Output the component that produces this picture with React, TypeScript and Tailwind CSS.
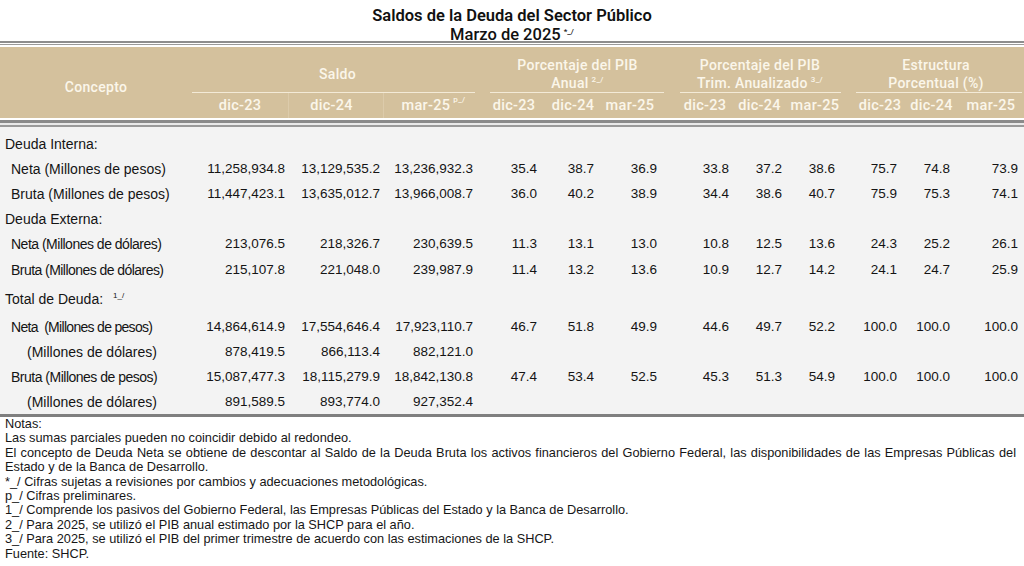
import React from 'react';

const cols =
  'grid grid-cols-[192px_96px_95px_100px_62px_56px_71px_61px_53px_62px_57px_53px_66px]';

// padding-right so the figures line up with the printed column
const numPad = [
  'pr-[3px]', 'pr-[3px]', 'pr-[10px]',
  'pr-[8px]', 'pr-[7px]', 'pr-[15px]',
  'pr-[4px]', 'pr-[4px]', 'pr-[13px]',
  'pr-[8px]', 'pr-[8px]', 'pr-[6px]',
];

const headPad = [
  '', 'pr-[9px]', '',
  '', '', 'pr-[13px]',
  'pl-[5px]', '', 'pr-[4px]',
  'pl-[7px]', '', '',
];

type Row = {
  label: string;
  kind: 'section' | 'item' | 'sub';
  tight?: string;
  values?: string[];
  h: string;
  note?: string;
};

const rows: Row[] = [
  { label: 'Deuda Interna:', kind: 'section', h: 'h-[25px]' },
  {
    label: 'Neta (Millones de pesos)',
    kind: 'item',
    h: 'h-[25px]',
    values: ['11,258,934.8', '13,129,535.2', '13,236,932.3', '35.4', '38.7', '36.9', '33.8', '37.2', '38.6', '75.7', '74.8', '73.9'],
  },
  {
    label: 'Bruta (Millones de pesos)',
    kind: 'item',
    h: 'h-[25px]',
    values: ['11,447,423.1', '13,635,012.7', '13,966,008.7', '36.0', '40.2', '38.9', '34.4', '38.6', '40.7', '75.9', '75.3', '74.1'],
  },
  { label: 'Deuda Externa:', kind: 'section', h: 'h-[25px]' },
  {
    label: 'Neta (Millones de dólares)',
    kind: 'item',
    tight: 'tracking-[-0.5px]',
    h: 'h-[25px]',
    values: ['213,076.5', '218,326.7', '230,639.5', '11.3', '13.1', '13.0', '10.8', '12.5', '13.6', '24.3', '25.2', '26.1'],
  },
  {
    label: 'Bruta (Millones de dólares)',
    kind: 'item',
    tight: 'tracking-[-0.55px]',
    h: 'h-[27px]',
    values: ['215,107.8', '221,048.0', '239,987.9', '11.4', '13.2', '13.6', '10.9', '12.7', '14.2', '24.1', '24.7', '25.9'],
  },
  { label: 'Total de Deuda:', kind: 'section', note: '1_/', h: 'h-[30px]' },
  {
    label: 'Neta  (Millones de pesos)',
    kind: 'item',
    tight: 'tracking-[-0.7px]',
    h: 'h-[26px]',
    values: ['14,864,614.9', '17,554,646.4', '17,923,110.7', '46.7', '51.8', '49.9', '44.6', '49.7', '52.2', '100.0', '100.0', '100.0'],
  },
  {
    label: '(Millones de dólares)',
    kind: 'sub',
    h: 'h-[24px]',
    values: ['878,419.5', '866,113.4', '882,121.0'],
  },
  {
    label: 'Bruta (Millones de pesos)',
    kind: 'item',
    tight: 'tracking-[-0.5px]',
    h: 'h-[26px]',
    values: ['15,087,477.3', '18,115,279.9', '18,842,130.8', '47.4', '53.4', '52.5', '45.3', '51.3', '54.9', '100.0', '100.0', '100.0'],
  },
  {
    label: '(Millones de dólares)',
    kind: 'sub',
    h: 'h-[24px]',
    values: ['891,589.5', '893,774.0', '927,352.4'],
  },
];

const groups = [
  { span: 'col-span-3', line: 'ml-0 mr-[8px]', lines: ['Saldo'] },
  { span: 'col-span-3', line: 'ml-[7px] mr-[8px]', lines: ['Porcentaje del PIB', 'Anual'], note: '2_/' },
  { span: 'col-span-3', line: 'ml-[8px] mr-[7px]', lines: ['Porcentaje del PIB', 'Trim. Anualizado'], note: '3_/' },
  { span: 'col-span-3', line: 'ml-[8px] mr-[2px]', lines: ['Estructura', 'Porcentual (%)'] },
];

const periods = ['dic-23', 'dic-24', 'mar-25'];

const notesAfter = [
  '*_/ Cifras sujetas a revisiones por cambios y adecuaciones metodológicas.',
  'p_/ Cifras preliminares.',
  '1_/ Comprende los pasivos del Gobierno Federal, las Empresas Públicas del Estado y la Banca de Desarrollo.',
  '2_/ Para 2025, se utilizó el PIB anual estimado por la SHCP para el año.',
  '3_/ Para 2025, se utilizó el PIB del primer trimestre de acuerdo con las estimaciones de la SHCP.',
  'Fuente: SHCP.',
];

function Sup({ children }: { children: React.ReactNode }) {
  return <span className="relative -top-[6px] ml-[3px] text-[8px] leading-none">{children}</span>;
}

function Header() {
  return (
    <div className={`${cols} bg-[#d4c19d] text-[#fbf6ea] font-['Roboto',sans-serif] font-medium`}>
      <div className="row-span-2 flex items-center justify-center pt-[9px] text-[14px] tracking-[0.3px]">
        Concepto
      </div>
      {groups.map((g, i) => (
        <div key={i} className={`${g.span} flex h-[46px] flex-col`}>
          <div className="flex flex-1 flex-col items-center justify-center pt-[8px] text-[14px] leading-[18px] tracking-[0.3px]">
            {g.lines.map((l, j) => (
              <div key={j}>
                {l}
                {j === g.lines.length - 1 && g.note && <Sup>{g.note}</Sup>}
              </div>
            ))}
          </div>
          <div className={`h-px bg-[#f3ead7] ${g.line}`} />
        </div>
      ))}
      {Array.from({ length: 12 }).map((_, i) => (
        <div
          key={i}
          className={`flex h-[25px] items-center justify-center text-[14.5px] tracking-[0.3px] ${headPad[i]} ${i < 3 && i > 0 ? 'border-l border-[#dccbab]' : ''}`}
        >
          {periods[i % 3]}
          {i === 2 && <Sup>p_/</Sup>}
        </div>
      ))}
    </div>
  );
}

export default function App() {
  return (
    <div className="w-[1024px] h-[566px] overflow-hidden bg-white text-[#141414] font-['Liberation_Sans',Arial,sans-serif]">
      <div className="flex h-[41px] flex-col items-center pt-[6px] font-['Roboto',sans-serif] text-[#111]">
        <div className="h-[20px] text-[16.5px] font-semibold leading-[20px]">
          Saldos de la Deuda del Sector Público
        </div>
        <div className="h-[15px] text-[16.5px] font-medium leading-[17px]">
          Marzo de 2025
          <Sup>*_/</Sup>
        </div>
      </div>

      <div className="h-[2px] bg-[#8d8d8d]" />
      <div className="h-px" />
      <div className="h-px bg-[#9a9a9a]" />
      <div className="h-[2px]" />
      <Header />
      <div className="h-[2px]" />
      <div className="h-[3px] bg-[#8a8a8a]" />
      <div className="h-[2px] bg-[#e9e9e9]" />
      <div className="h-[2px] bg-[#9a9a9a]" />

      <div className="bg-[#f3f3f3] pt-[5px] text-[13.5px]">
        {rows.map((r, i) => (
          <div key={i} className={`${cols} ${r.h} items-center`}>
            <div
              className={`whitespace-pre text-[14px] ${r.tight ?? ''} ${
                r.kind === 'section' ? 'pl-[5px]' : r.kind === 'item' ? 'pl-[11px]' : 'pl-[27px]'
              }`}
            >
              {r.label}
              {r.note && (
                <span className="relative -top-[6px] ml-[10px] text-[8px] leading-none tracking-normal">{r.note}</span>
              )}
            </div>
            {r.values?.map((v, j) => (
              <div key={j} className={`text-right ${numPad[j]}`}>
                {v}
              </div>
            ))}
          </div>
        ))}
      </div>
      <div className="h-[3px] bg-[#7f7f7f]" />

      <div className="pl-[5px] pr-[8px] text-[12.75px] leading-[14.4px] text-[#161616]">
        <div>Notas:</div>
        <div>Las sumas parciales pueden no coincidir debido al redondeo.</div>
        <p className="text-justify">
          El concepto de Deuda Neta se obtiene de descontar al Saldo de la Deuda Bruta los activos financieros del Gobierno
          Federal, las disponibilidades de las Empresas Públicas del Estado y de la Banca de Desarrollo.
        </p>
        {notesAfter.map((n, i) => (
          <div key={i}>{n}</div>
        ))}
      </div>
    </div>
  );
}
